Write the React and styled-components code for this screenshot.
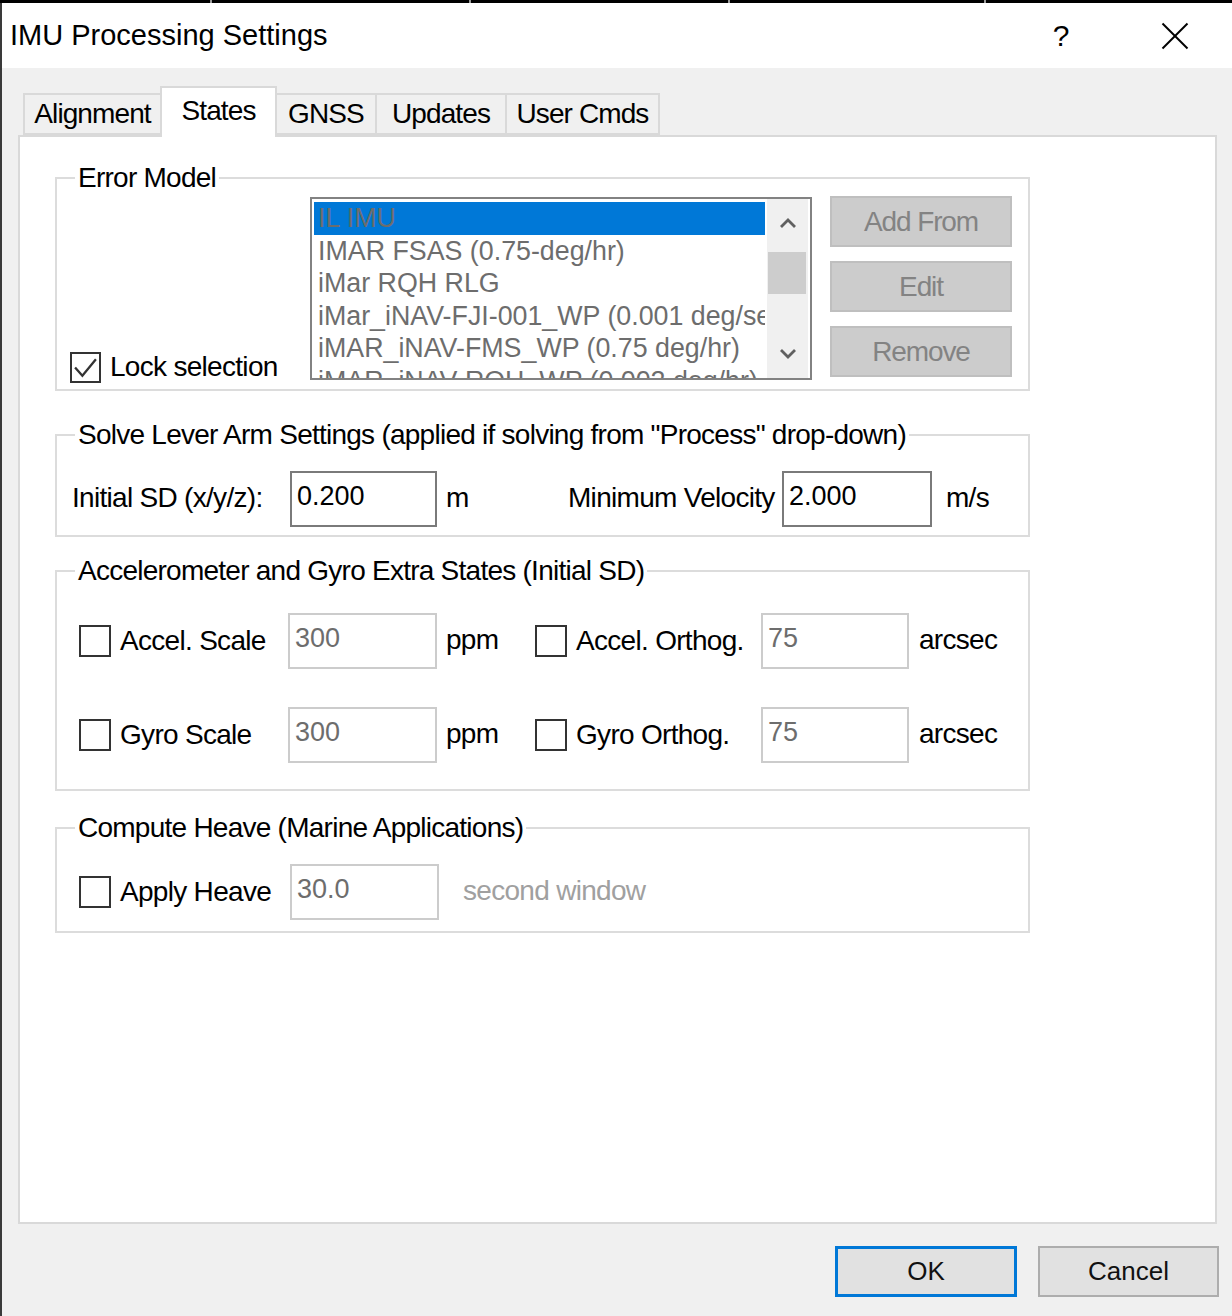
import React from "react";
import styled, { createGlobalStyle } from "styled-components";

const GlobalStyle = createGlobalStyle`
  html, body {
    margin: 0;
    padding: 0;
    background: #f0f0f0;
  }
  body {
    font-family: "Liberation Sans", Arial, sans-serif;
  }
  * {
    box-sizing: border-box;
  }
`;

const Window = styled.div`
  width: 1232px;
  height: 1316px;
  display: flex;
  flex-direction: column;
  background: #f0f0f0;
  overflow: hidden;
`;

const TopEdge = styled.div`
  height: 3px;
  flex-shrink: 0;
  background: linear-gradient(
    to right,
    #000 210px, #9a9a9a 210px, #9a9a9a 212px, #000 212px,
    #000 469px, #9a9a9a 469px, #9a9a9a 471px, #000 471px,
    #000 728px, #9a9a9a 728px, #9a9a9a 730px, #000 730px,
    #000 984px, #9a9a9a 984px, #9a9a9a 986px, #000 986px
  );
`;

const Frame = styled.div`
  flex: 1;
  display: flex;
  flex-direction: column;
  border-left: 2px solid #3a3a3a;
`;

const TitleBar = styled.div`
  height: 65px;
  flex-shrink: 0;
  display: flex;
  align-items: center;
  background: #fff;
  padding-left: 8px;
`;

const Title = styled.div`
  flex: 1;
  font-size: 29px;
  color: #000;
  margin-top: -1px;
`;

const CaptionButton = styled.div`
  width: 114px;
  height: 65px;
  display: flex;
  align-items: center;
  justify-content: center;
  font-size: 30px;
  color: #000;
`;

const Body = styled.div`
  flex: 1;
  display: flex;
  flex-direction: column;
  padding: 18px 15px 19px 16px;
`;

const TabRow = styled.div`
  height: 51px;
  display: flex;
  align-items: flex-end;
  padding-left: 5px;
  margin-bottom: -2px;
`;

const Tab = styled.div`
  position: relative;
  z-index: ${(p) => (p.$active ? 2 : 1)};
  width: ${(p) => p.$w}px;
  height: ${(p) => (p.$active ? 51 : 42)}px;
  margin-left: ${(p) => (p.$first ? 0 : -2)}px;
  margin-bottom: ${(p) => (p.$active ? 0 : 2)}px;
  padding-bottom: ${(p) => (p.$active ? 4 : 0)}px;
  display: flex;
  align-items: center;
  justify-content: center;
  border: 2px solid #d9d9d9;
  border-bottom: ${(p) => (p.$active ? "none" : "2px solid #d9d9d9")};
  background: ${(p) => (p.$active ? "#fff" : "#f0f0f0")};
  font-size: 28px;
  letter-spacing: -0.9px;
  color: #000;
`;

const Panel = styled.div`
  flex: 1;
  background: #fff;
  border: 2px solid #d9d9d9;
  padding: 25px 0 0 35px;
`;

const GroupBox = styled.fieldset`
  width: 975px;
  min-width: 0;
  margin: ${(p) => p.$top || 0}px 0 0 0;
  padding: 0;
  border: 2px solid #dcdcdc;
`;

const Legend = styled.legend`
  margin-left: 18px;
  padding: 0 3px;
  font-size: 28px;
  line-height: 32px;
  letter-spacing: -0.75px;
  color: #000;
`;

const ErrorModelBody = styled.div`
  display: flex;
  padding: 2px 0 9px 13px;
`;

const LockColumn = styled.div`
  width: 240px;
  display: flex;
  flex-direction: column;
  justify-content: flex-end;
  margin-bottom: -3px;
`;

const CheckRow = styled.label`
  display: flex;
  align-items: center;
  gap: 9px;
  font-size: 28px;
  letter-spacing: -0.7px;
  color: #000;
  white-space: nowrap;
`;

const Box = styled.span`
  width: ${(p) => p.$size || 32}px;
  height: ${(p) => p.$size || 32}px;
  flex-shrink: 0;
  display: inline-flex;
  align-items: center;
  justify-content: center;
  border: 2px solid #333;
  background: #fff;
`;

const ListBox = styled.div`
  width: 502px;
  height: 183px;
  margin-top: 1px;
  display: flex;
  border: 2px solid #828282;
  background: #fff;
  overflow: hidden;
`;

const ListItems = styled.div`
  flex: 1;
  min-width: 0;
  padding: 3px 2px 0 2px;
  overflow: hidden;
`;

const ListItem = styled.div`
  height: 32.5px;
  line-height: 32px;
  padding-left: 4px;
  font-size: 26.8px;
  white-space: nowrap;
  overflow: hidden;
  color: #6d6d6d;
  background: ${(p) => (p.$selected ? "#0078d7" : "transparent")};
`;

const ScrollBar = styled.div`
  width: 41px;
  flex-shrink: 0;
  margin-right: 2px;
  display: flex;
  flex-direction: column;
  background: #f0f0f0;
`;

const ScrollArrow = styled.div`
  height: 48px;
  display: flex;
  align-items: center;
  justify-content: center;
`;

const ScrollTrack = styled.div`
  flex: 1;
  padding: 5px 2px 0 1px;
`;

const ScrollThumb = styled.div`
  height: 42px;
  background: #cdcdcd;
`;

const SideButtons = styled.div`
  display: flex;
  flex-direction: column;
  gap: 14px;
  margin-left: 18px;
`;

const SideButton = styled.div`
  width: 182px;
  height: 51px;
  display: flex;
  align-items: center;
  justify-content: center;
  background: #cccccc;
  border: 2px solid #bfbfbf;
  font-size: 28px;
  letter-spacing: -1.1px;
  color: #838383;
`;

const FieldGrid = styled.div`
  display: grid;
  grid-template-columns: ${(p) => p.$cols};
  grid-auto-rows: 56px;
  row-gap: 38px;
  align-items: center;
  padding: ${(p) => p.$pad};
`;

const Label = styled.span`
  font-size: 28px;
  letter-spacing: -0.7px;
  color: ${(p) => (p.$muted ? "#a0a0a0" : "#000")};
  padding-left: ${(p) => p.$indent || 0}px;
  padding-bottom: 3px;
  white-space: nowrap;
`;

const TextBox = styled.div`
  height: 56px;
  display: flex;
  align-items: center;
  padding: 0 0 6px 5px;
  border: 2px solid ${(p) => (p.$disabled ? "#cccccc" : "#7a7a7a")};
  background: #fff;
  font-size: 27px;
  color: ${(p) => (p.$disabled ? "#6d6d6d" : "#000")};
`;

const Footer = styled.div`
  display: flex;
  justify-content: flex-end;
  gap: 21px;
  padding-top: 22px;
  margin-right: -2px;
`;

const DialogButton = styled.div`
  width: ${(p) => p.$w}px;
  height: 51px;
  display: flex;
  align-items: center;
  justify-content: center;
  background: #e1e1e1;
  border: ${(p) => (p.$default ? "3px solid #0078d7" : "2px solid #adadad")};
  font-size: 26px;
  color: #111;
`;

const Check = ({ checked, size }) => (
  <Box $size={size}>
    {checked && (
      <svg width="25" height="25" viewBox="0 0 24 24">
        <polyline points="2,12 9,20 22,4" fill="none" stroke="#333" strokeWidth="2.2" />
      </svg>
    )}
  </Box>
);

const Chevron = ({ up }) => (
  <svg width="18" height="12" viewBox="0 0 18 12">
    <polyline
      points={up ? "2,10 9,3 16,10" : "2,2 9,9 16,2"}
      fill="none"
      stroke="#606060"
      strokeWidth="2.8"
    />
  </svg>
);

const models = [
  "IL IMU",
  "IMAR FSAS (0.75-deg/hr)",
  "iMar RQH RLG",
  "iMar_iNAV-FJI-001_WP (0.001 deg/sec)",
  "iMAR_iNAV-FMS_WP (0.75 deg/hr)",
  "iMAR_iNAV-RQH_WP (0.002 deg/hr)",
];

const tabs = [
  { name: "Alignment", w: 139 },
  { name: "States", w: 117, active: true },
  { name: "GNSS", w: 102 },
  { name: "Updates", w: 132 },
  { name: "User Cmds", w: 155 },
];

export default function App() {
  return (
    <Window>
      <GlobalStyle />
      <TopEdge />
      <Frame>
        <TitleBar>
          <Title>IMU Processing Settings</Title>
          <CaptionButton>?</CaptionButton>
          <CaptionButton>
            <svg width="28" height="28" viewBox="0 0 28 28">
              <line x1="1.5" y1="1.5" x2="26.5" y2="26.5" stroke="#000" strokeWidth="2" />
              <line x1="26.5" y1="1.5" x2="1.5" y2="26.5" stroke="#000" strokeWidth="2" />
            </svg>
          </CaptionButton>
        </TitleBar>

        <Body>
          <TabRow>
            {tabs.map((t, i) => (
              <Tab key={t.name} $w={t.w} $active={t.active} $first={i === 0}>
                {t.name}
              </Tab>
            ))}
          </TabRow>

          <Panel>
            <GroupBox>
              <Legend>Error Model</Legend>
              <ErrorModelBody>
                <LockColumn>
                  <CheckRow>
                    <Check checked size={31} />
                    Lock selection
                  </CheckRow>
                </LockColumn>
                <ListBox>
                  <ListItems>
                    {models.map((m, i) => (
                      <ListItem key={m} $selected={i === 0}>
                        {m}
                      </ListItem>
                    ))}
                  </ListItems>
                  <ScrollBar>
                    <ScrollArrow>
                      <Chevron up />
                    </ScrollArrow>
                    <ScrollTrack>
                      <ScrollThumb />
                    </ScrollTrack>
                    <ScrollArrow>
                      <Chevron />
                    </ScrollArrow>
                  </ScrollBar>
                </ListBox>
                <SideButtons>
                  <SideButton>Add From</SideButton>
                  <SideButton>Edit</SideButton>
                  <SideButton>Remove</SideButton>
                </SideButtons>
              </ErrorModelBody>
            </GroupBox>

            <GroupBox $top={28}>
              <Legend>Solve Lever Arm Settings (applied if solving from "Process" drop-down)</Legend>
              <FieldGrid $cols="218px 147px 131px 214px 150px auto" $pad="20px 0 8px 15px">
                <Label>Initial SD (x/y/z):</Label>
                <TextBox>0.200</TextBox>
                <Label $indent={9}>m</Label>
                <Label>Minimum Velocity</Label>
                <TextBox>2.000</TextBox>
                <Label $indent={14}>m/s</Label>
              </FieldGrid>
            </GroupBox>

            <GroupBox $top={18}>
              <Legend>Accelerometer and Gyro Extra States (Initial SD)</Legend>
              <FieldGrid $cols="209px 149px 98px 226px 148px auto" $pad="26px 0 26px 22px">
                <CheckRow>
                  <Check />
                  Accel. Scale
                </CheckRow>
                <TextBox $disabled>300</TextBox>
                <Label $indent={9}>ppm</Label>
                <CheckRow>
                  <Check />
                  Accel. Orthog.
                </CheckRow>
                <TextBox $disabled>75</TextBox>
                <Label $indent={10}>arcsec</Label>

                <CheckRow>
                  <Check />
                  Gyro Scale
                </CheckRow>
                <TextBox $disabled>300</TextBox>
                <Label $indent={9}>ppm</Label>
                <CheckRow>
                  <Check />
                  Gyro Orthog.
                </CheckRow>
                <TextBox $disabled>75</TextBox>
                <Label $indent={10}>arcsec</Label>
              </FieldGrid>
            </GroupBox>

            <GroupBox $top={21}>
              <Legend>Compute Heave (Marine Applications)</Legend>
              <FieldGrid $cols="211px 149px auto" $pad="20px 0 11px 22px">
                <CheckRow>
                  <Check />
                  Apply Heave
                </CheckRow>
                <TextBox $disabled>30.0</TextBox>
                <Label $indent={24} $muted>
                  second window
                </Label>
              </FieldGrid>
            </GroupBox>
          </Panel>

          <Footer>
            <DialogButton $w={182} $default>
              OK
            </DialogButton>
            <DialogButton $w={181}>Cancel</DialogButton>
          </Footer>
        </Body>
      </Frame>
    </Window>
  );
}
